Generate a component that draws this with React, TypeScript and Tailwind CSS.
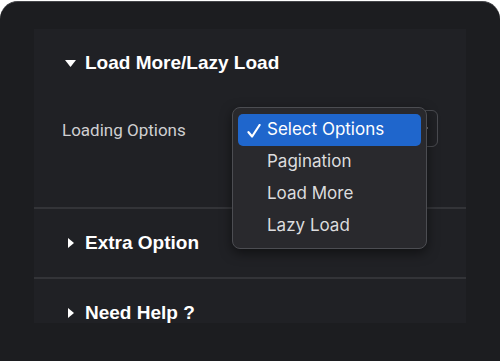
import React from "react";

function CaretDown() {
  return (
    <svg width="11" height="7" viewBox="0 0 11 7" className="shrink-0">
      <path d="M0 0h11L5.5 7z" fill="#ffffff" />
    </svg>
  );
}

function CaretRight() {
  return (
    <svg width="6" height="10" viewBox="0 0 6 10" className="shrink-0">
      <path d="M0 0l6 5-6 5z" fill="#ffffff" />
    </svg>
  );
}

function Check() {
  return (
    <svg width="14" height="14" viewBox="0 0 14 14" className="mt-[2px]">
      <path d="M1.5 8.2l3.6 4.3L12.6 1" fill="none" stroke="#ffffff" strokeWidth="2.2" strokeLinecap="round" strokeLinejoin="round" />
    </svg>
  );
}

const options = ["Select Options", "Pagination", "Load More", "Lazy Load"];

function Heading({ open, children }: { open?: boolean; children: React.ReactNode }) {
  return (
    <div className={`flex items-center ${open ? "gap-[9px] pl-[31px]" : "gap-[11px] pl-[34px]"}`}>
      {open ? <CaretDown /> : <CaretRight />}
      <span className="text-[19px] font-bold text-white font-['Liberation_Sans',Arial,sans-serif]">
        {children}
      </span>
    </div>
  );
}

export default function App() {
  return (
    <div className="w-[500px] h-[361px] bg-white pt-px overflow-hidden">
      <div className="h-[360px] rounded-t-[18px] bg-[#1c1d20] border-t border-[#45464a] px-[34px] pt-[27px]">
        <div className="h-[294px] bg-[#202125] overflow-hidden">
          {/* Load More / Lazy Load section */}
          <div className="h-[178px] pt-[20px]">
            <Heading open>Load More/Lazy Load</Heading>
            <div className="relative mt-[39px] flex items-center pl-[28px]">
              <span className="text-[17px] leading-[26px] text-[#cfcfd1] font-['Roboto',sans-serif]">Loading Options</span>
              <div className="absolute left-[202px] top-[-7px] w-[202px] h-[37px] rounded-[6px] border border-[#4a4b50] flex items-center justify-end pr-[9px]">
                <span className="w-[2px] h-[2px] bg-[#8a8a8e] rounded-full" />
              </div>
              <div className="absolute left-[198px] top-[-10px] w-[195px] rounded-[8px] border border-[#4c4d52] bg-[#29292d] px-[5px] py-[6px] shadow-[0_4px_12px_rgba(0,0,0,0.5)] font-['Inter',sans-serif]">
                {options.map((o, i) => (
                  <div
                    key={o}
                    className={`flex items-center h-[32px] rounded-[5px] text-[17px] ${
                      i === 0 ? "bg-[#1f66cc] text-white" : "text-[#dcdcde]"
                    }`}
                  >
                    <span className="w-[29px] pl-[9px] flex">{i === 0 ? <Check /> : null}</span>
                    <span>{o}</span>
                  </div>
                ))}
              </div>
            </div>
          </div>
          <div className="h-[2px] bg-[#333438]" />
          {/* Extra Option */}
          <div className="h-[68px] flex items-center">
            <Heading>Extra Option</Heading>
          </div>
          <div className="h-[2px] bg-[#333438]" />
          <div className="h-[68px] flex items-center">
            <Heading>Need Help ?</Heading>
          </div>
        </div>
      </div>
    </div>
  );
}
